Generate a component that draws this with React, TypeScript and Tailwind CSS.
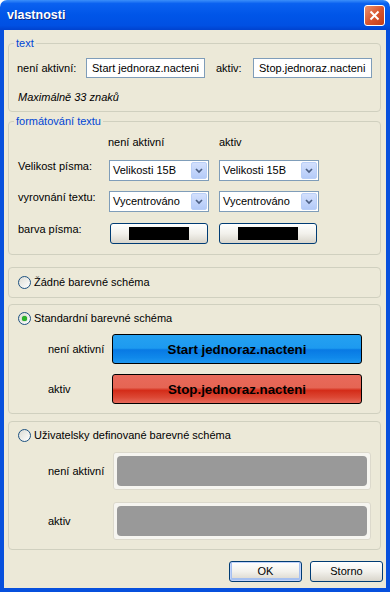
const Radio = ({ checked = false }: { checked?: boolean }) => (
  <span className="flex h-[13px] w-[13px] shrink-0 items-center justify-center rounded-full border border-[#1c5180] bg-linear-to-br from-[#dcdcd5] to-white">
    {checked && <span className="h-[5px] w-[5px] rounded-full bg-[#2bb42b] shadow-[0_0_1px_#1a7d1a]" />}
  </span>
);

const Combo = ({ value }: { value: string }) => (
  <div className="flex h-[21px] w-[100px] items-center border border-[#7f9db9] bg-white pl-[3px] pr-px">
    <span className="flex-1">{value}</span>
    <span className="flex h-[17px] w-[16px] items-center justify-center rounded-[2px] border border-[#b9cff7] bg-linear-to-b from-[#d3e0fd] to-[#b4cbf8]">
      <svg width="8" height="6" viewBox="0 0 8 6">
        <path d="M1 1 L4 4 L7 1" stroke="#4d6185" strokeWidth="1.7" fill="none" />
      </svg>
    </span>
  </div>
);

const XpButton = ({ className, children }: { className: string; children?: React.ReactNode }) => (
  <div
    className={`flex items-center justify-center rounded-[3px] border border-[#003c74] bg-linear-to-b from-white via-[#f2f1ec] to-[#d9d5cb] ${className}`}
  >
    {children}
  </div>
);

const TextInput = ({ value }: { value: string }) => (
  <div className="flex h-[20px] w-[119px] items-center border border-[#7f9db9] bg-white pl-[5px]">{value}</div>
);

const GrayBox = () => (
  <div className="h-[38px] w-[258px] rounded-[3px] border border-[#dcd9cc] bg-[#f6f5f0] p-[3px]">
    <div className="h-full w-full rounded-[4px] bg-[#999999]" />
  </div>
);

const App = () => {
  return (
    <div className="flex h-[592px] w-[390px] flex-col font-['Liberation_Sans',Arial,sans-serif] text-[11px] leading-[13px] text-black">
      <div className="flex h-[30px] shrink-0 items-center justify-between rounded-t-[7px] bg-[linear-gradient(to_bottom,#3b8ffa_0%,#0a61f0_12%,#0055e8_50%,#0050e3_85%,#0042cf_100%)] pl-[7px] pr-[5px]">
        <span className="text-[12.5px] font-bold text-white [text-shadow:1px_1px_#0b2a86]">vlastnosti</span>

        <div className="flex h-[21px] w-[21px] items-center justify-center rounded-[3px] border border-white bg-linear-to-br from-[#e9916f] via-[#d9562f] to-[#c33d16]">
          <svg width="11" height="11" viewBox="0 0 11 11">
            <path d="M1.5 1.5 L9.5 9.5 M9.5 1.5 L1.5 9.5" stroke="white" strokeWidth="2" />
          </svg>
        </div>
      </div>

      <div className="flex flex-1 flex-col border-x-4 border-b-4 border-[#0750dd] bg-[#ece9d8]">
        <fieldset className="ml-[4px] mt-[7px] w-[373px] rounded-[4px] border border-[#d0d0bf] pb-[7px]">
          <legend className="ml-[5px] px-[2px] text-[#0046d5]">text</legend>

          <div className="pl-[8px] pt-[8px]">
            <div className="flex items-center">
              <span className="w-[69px]">není aktivní:</span>
              <TextInput value="Start jednoraz.nacteni" />
              <span className="ml-[11px] w-[37px]">aktiv:</span>
              <TextInput value="Stop.jednoraz.nacteni" />
            </div>

            <div className="mt-[13px] pl-px italic">Maximálně 33 znaků</div>
          </div>
        </fieldset>

        <fieldset className="ml-[4px] mt-[3px] w-[373px] rounded-[4px] border border-[#d0d0bf] pb-[10px]">
          <legend className="ml-[5px] px-[2px] text-[#0046d5]">formátování textu</legend>

          <div className="flex flex-col pl-[8px] pt-[8px]">
            <div className="flex">
              <span className="w-[91px]" />
              <span className="w-[111px]">není aktivní</span>
              <span>aktiv</span>
            </div>

            <div className="mt-[11px] flex items-start gap-[10px]">
              <span className="w-[82px] pl-px">Velikost písma:</span>
              <Combo value="Velikosti 15B" />
              <Combo value="Velikosti 15B" />
            </div>

            <div className="mt-[10px] flex items-start gap-[10px]">
              <span className="w-[82px] pl-px">vyrovnání textu:</span>
              <Combo value="Vycentrováno" />
              <Combo value="Vycentrováno" />
            </div>

            <div className="mt-[11px] flex items-start gap-[10px]">
              <span className="w-[83px] pl-px">barva písma:</span>
              <XpButton className="h-[21px] w-[98px]">
                <div className="h-[13px] w-[60px] bg-black" />
              </XpButton>
              <XpButton className="ml-px h-[21px] w-[98px]">
                <div className="h-[13px] w-[60px] bg-black" />
              </XpButton>
            </div>
          </div>
        </fieldset>

        <div className="ml-[4px] mt-[12px] flex h-[31px] w-[373px] items-center gap-[3px] rounded-[4px] border border-[#d0d0bf] pl-[9px]">
          <Radio />
          <span>Žádné barevné schéma</span>
        </div>

        <div className="ml-[4px] mt-[6px] w-[373px] rounded-[4px] border border-[#d0d0bf] pb-[9px] pl-[9px] pt-[7px]">
          <div className="flex items-center gap-[3px]">
            <Radio checked />
            <span>Standardní barevné schéma</span>
          </div>

          <div className="mt-[9px] flex items-center pl-[30px]">
            <span className="w-[64px]">není aktivní</span>
            <div className="flex h-[30px] w-[250px] items-center justify-center rounded-[3px] border border-black bg-[linear-gradient(to_bottom,#25a1f1_0%,#1d9af0_47%,#0879e4_53%,#0f88ea_80%,#1e97f0_100%)] text-[13.3px] font-bold">
              Start jednoraz.nacteni
            </div>
          </div>

          <div className="mt-[10px] flex items-center pl-[30px]">
            <span className="w-[64px]">aktiv</span>
            <div className="flex h-[30px] w-[250px] items-center justify-center rounded-[3px] border border-black bg-[linear-gradient(to_bottom,#e86a5b_0%,#e56554_45%,#d42c19_55%,#dc4835_80%,#e7695a_100%)] text-[13.3px] font-bold">
              Stop.jednoraz.nacteni
            </div>
          </div>
        </div>

        <div className="ml-[4px] mt-[7px] w-[373px] rounded-[4px] border border-[#d0d0bf] pb-[9px] pl-[9px] pt-[7px]">
          <div className="flex items-center gap-[3px]">
            <Radio />
            <span>Uživatelsky definované barevné schéma</span>
          </div>

          <div className="mt-[10px] flex items-center pl-[30px]">
            <span className="w-[65px]">není aktivní</span>
            <GrayBox />
          </div>

          <div className="mt-[12px] flex items-center pl-[30px]">
            <span className="w-[65px]">aktiv</span>
            <GrayBox />
          </div>
        </div>

        <div className="mt-[11px] flex justify-end gap-[8px] pr-[3px]">
          <XpButton className="h-[21px] w-[73px] shadow-[inset_0_0_0_1px_#c1d3fb,inset_0_-1px_0_2px_#a6c0f0]">OK</XpButton>
          <XpButton className="h-[21px] w-[73px]">Storno</XpButton>
        </div>
      </div>
    </div>
  );
};

export default App;
